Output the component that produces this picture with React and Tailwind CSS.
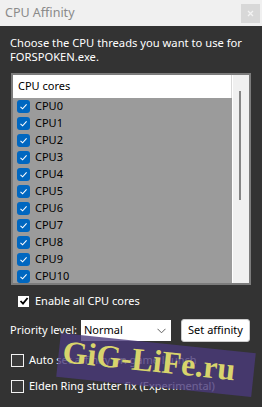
import React from 'react';

const cpus = Array.from({ length: 11 }, (_, i) => `CPU${i}`);

const BlueCheck = () => (
  <span className="flex items-center justify-center w-[13px] h-[13px] rounded-[3px] bg-[#0067c0] shrink-0">
    <svg width="9" height="9" viewBox="0 0 9 9" fill="none">
      <path d="M1.5 4.8 L3.6 6.8 L7.6 2.4" stroke="#ffffff" strokeWidth="1.1" />
    </svg>
  </span>
);

const EmptyBox = () => (
  <span className="block w-[13px] h-[13px] border border-[#f2f2f2] bg-[#3a3a3a] shrink-0" />
);

const App = () => {
  return (
    <div
      className="relative w-[262px] h-[407px] bg-[#333333] overflow-hidden text-[11px] text-white"
      style={{ fontFamily: '"Noto Sans", "Open Sans", sans-serif' }}
    >
      {/* Title bar */}
      <div className="flex items-center h-[26px] bg-[#f0f0f0] pl-[5px] pr-[2px]">
        <span className="text-[12.5px] text-[#8a8a8a]">CPU Affinity</span>
        <div className="ml-auto flex items-center justify-center w-[19px] h-[19px] bg-[#d8d8d8]">
          <svg width="7" height="7" viewBox="0 0 7 7">
            <path d="M1 1 L6 6 M6 1 L1 6" stroke="#f3f3f3" strokeWidth="1.3" />
          </svg>
        </div>
      </div>

      <div className="px-[10px]">
        <p className="mt-[10px] leading-[14px] text-[11.2px]">
          Choose the CPU threads you want to use for FORSPOKEN.exe.
        </p>

        {/* CPU list */}
        <div className="mt-[9px] ml-[1px] w-[240px] border-2 border-[#7c7c7c] flex h-[212px]">
          <div className="flex-1 flex flex-col text-black">
            <div className="h-[23px] bg-white flex items-center pl-[5px] border-r border-[#d9d9d9]">
              CPU cores
            </div>
            <div className="flex-1 bg-[#9b9b9b] overflow-hidden">
              {cpus.map((c) => (
                <div key={c} className="h-[17px] flex items-center gap-[5px] pl-[4px]">
                  <BlueCheck />
                  <span>{c}</span>
                </div>
              ))}
            </div>
          </div>
          <div className="w-[17px] bg-[#f0f0f0] border-l border-white pl-[6px] pt-[16px]">
            <div className="w-[2px] h-[109px] bg-[#858585]" />
          </div>
        </div>

        {/* Enable all */}
        <div className="mt-[9px] ml-[7px] flex items-center gap-[5px] h-[14px]">
          <span className="flex items-center justify-center w-[13px] h-[13px] bg-white border border-[#333]">
            <svg width="10" height="10" viewBox="0 0 10 10" fill="none">
              <path d="M1.5 5 L4 7.6 L8.6 2" stroke="#000000" strokeWidth="1.8" />
            </svg>
          </span>
          <span>Enable all CPU cores</span>
        </div>

        {/* Priority row */}
        <div className="mt-[11px] flex items-center h-[23px]">
          <span className="w-[71px] whitespace-nowrap">Priority level:</span>
          <div className="w-[90px] h-[21px] bg-white flex items-center pl-[3px] pr-[5px] text-black">
            <span>Normal</span>
            <svg className="ml-auto" width="9" height="6" viewBox="0 0 9 6" fill="none">
              <path d="M0.5 0.8 L4.5 4.8 L8.5 0.8" stroke="#606060" strokeWidth="1" />
            </svg>
          </div>
          <button className="ml-[10px] w-[69px] h-[23px] bg-white border border-[#cccccc] rounded-[3px] text-black text-[11px]">
            Set affinity
          </button>
        </div>

        <div className="mt-[11px] ml-[1px] flex items-center gap-[5px] h-[14px]">
          <EmptyBox />
          <span>Auto set affinity on game launch</span>
        </div>
        <div className="mt-[12px] ml-[1px] flex items-center gap-[5px] h-[14px]">
          <EmptyBox />
          <span>Elden Ring stutter fix (Experimental)</span>
        </div>
      </div>

      {/* Watermark overlay */}
      <div className="absolute left-[58px] top-[343px] w-[196px] h-[44px] bg-[#4a3a7a]/80 rotate-[6deg] flex items-center pl-[4px]">
        <span
          className="text-[32px] font-bold leading-none text-[#d8d46c] -mt-[8px]"
          style={{ fontFamily: '"Liberation Serif", serif' }}
        >
          GiG-LiFe.ru
        </span>
      </div>
    </div>
  );
};

export default App;
